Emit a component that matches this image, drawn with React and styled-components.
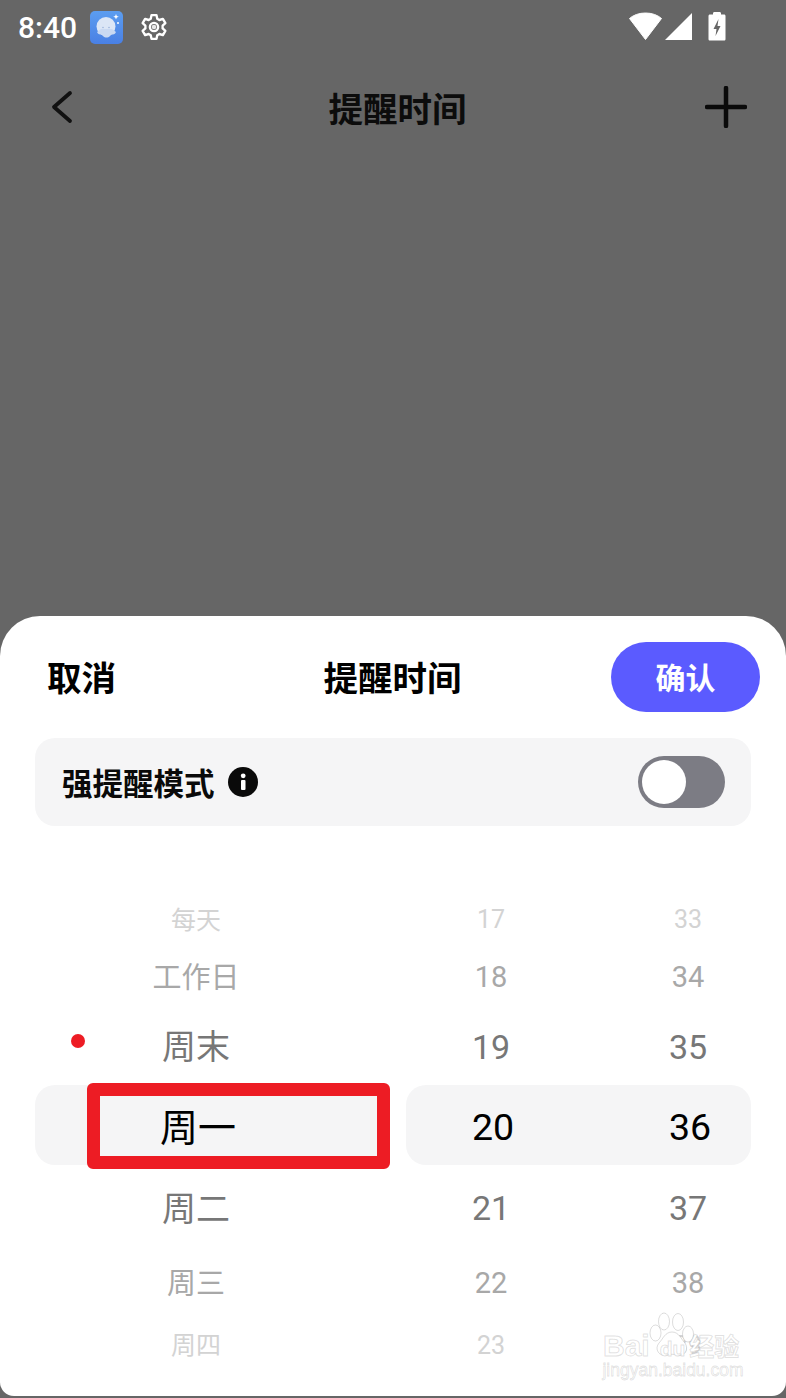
import React from "react";
import styled, { createGlobalStyle } from "styled-components";

const Global = createGlobalStyle`
  html, body { margin: 0; padding: 0; background: #666666; }
  * { box-sizing: border-box; }
`;

const CJK = `Roboto, "Noto Sans CJK SC", sans-serif`;

const Page = styled.div`
  position: relative;
  width: 786px;
  height: 1398px;
  overflow: hidden;
  background: #666666;
  font-family: ${CJK};
  display: flex;
  flex-direction: column;
`;

const StatusBar = styled.div`
  height: 54px;
  display: flex;
  align-items: center;
  padding: 0 60px 0 18px;
  color: #ffffff;
`;

const Clock = styled.span`
  font-size: 30px;
  font-weight: 500;
  width: 72px;
`;

const StatusRight = styled.div`
  margin-left: auto;
  display: flex;
  align-items: center;
  gap: 3px;
  padding-bottom: 2px;
`;

const Header = styled.div`
  height: 106px;
  display: grid;
  grid-template-columns: 1fr auto 1fr;
  align-items: center;
  padding: 0 39px 0 50px;
  color: #0c0c0c;
`;

const HeaderTitle = styled.div`
  font-size: 34.5px;
  font-weight: 700;
  margin-left: -2px;
`;

const HeaderAction = styled.div`
  justify-self: ${(p) => p.$side};
  display: flex;
`;

const Sheet = styled.div`
  margin-top: auto;
  height: 780px;
  margin-bottom: 2px;
  background: #ffffff;
  border-radius: 40px 40px 14px 14px;
  display: flex;
  flex-direction: column;
`;

const SheetTop = styled.div`
  height: 122px;
  padding: 26px 26px 0 47px;
  display: grid;
  grid-template-columns: 1fr auto 1fr;
  align-items: start;
`;

const Cancel = styled.div`
  font-size: 34.5px;
  font-weight: 700;
  line-height: 74px;
  color: #000;
`;

const SheetTitle = styled.div`
  font-size: 34.5px;
  font-weight: 700;
  line-height: 74px;
  color: #000;
  margin-left: -22px;
`;

const Confirm = styled.button`
  justify-self: end;
  width: 149px;
  height: 70px;
  border: 0;
  border-radius: 35px;
  background: #5b5bff;
  color: #ffffff;
  font-family: ${CJK};
  font-size: 30px;
  font-weight: 700;
  padding: 0 0 2px;
`;

const ModeRow = styled.div`
  margin: 0 35px;
  height: 88px;
  border-radius: 20px;
  background: #f5f5f6;
  display: flex;
  align-items: center;
  padding: 0 26px 0 27px;
`;

const ModeLabel = styled.span`
  font-size: 30.5px;
  font-weight: 700;
  color: #0a0a0a;
`;

const InfoIcon = styled.svg`
  margin-left: 13px;
`;

const Toggle = styled.div`
  margin-left: auto;
  width: 87px;
  height: 52px;
  border-radius: 26px;
  background: #7c7c84;
  padding: 4px;
`;

const Knob = styled.div`
  width: 44px;
  height: 44px;
  border-radius: 50%;
  background: #ffffff;
`;

const Wheel = styled.div`
  position: relative;
  margin: 63px 35px 0;
  display: flex;
  flex-direction: column;
`;

const Row = styled.div`
  height: ${(p) => p.$h}px;
  display: grid;
  grid-template-columns: 355px 345px;
  column-gap: 16px;
  align-items: stretch;
  font-size: ${(p) => p.$size}px;
  color: ${(p) => p.$color};
`;

const DayCell = styled.div`
  display: flex;
  align-items: center;
  justify-content: center;
  padding-right: ${(p) => (p.$active ? 29 : 33)}px;
  padding-bottom: ${(p) => (p.$active ? 2 : 0)}px;
  border-radius: 20px;
  background: ${(p) => (p.$active ? "#f5f5f6" : "transparent")};
`;

const TimeCell = styled.div`
  display: grid;
  grid-template-columns: 120px 120px;
  column-gap: 77px;
  padding-left: ${(p) => (p.$active ? 27 : 25)}px;
  padding-top: 4px;
  align-items: center;
  text-align: center;
  border-radius: 20px;
  background: ${(p) => (p.$active ? "#f5f5f6" : "transparent")};
  font-size: ${(p) => p.$num}px;
`;

const RedDot = styled.div`
  position: absolute;
  left: 36px;
  top: 145px;
  width: 14px;
  height: 14px;
  border-radius: 50%;
  background: #ed1c24;
`;

const RedBox = styled.div`
  position: absolute;
  left: 52px;
  top: 194px;
  width: 303px;
  height: 86px;
  border: 13px solid #ed1c24;
  border-radius: 6px;
`;

const Watermark = styled.div`
  position: absolute;
  left: 602px;
  top: 1312px;
  width: 142px;
  height: 72px;
  pointer-events: none;
`;

const WatermarkPaw = styled.svg`
  position: absolute;
  left: 47px;
  top: 0;
`;

const WatermarkBrand = styled.div`
  position: absolute;
  top: 17px;
  left: 1px;
  display: flex;
  align-items: baseline;
  font-family: "Liberation Sans", "Noto Sans CJK SC", sans-serif;
  font-weight: 700;
  line-height: 34px;
  color: #ffffff;
  -webkit-text-stroke: 1px rgba(120, 120, 120, 0.22);
`;

const BrandPart = styled.span`
  font-size: ${(p) => p.$size}px;
  margin-left: ${(p) => p.$gap}px;
`;

const WatermarkUrl = styled.div`
  position: absolute;
  top: 48px;
  left: 0;
  width: 142px;
  text-align: center;
  font-family: "Liberation Sans", sans-serif;
  font-size: 17.5px;
  line-height: 20px;
  color: #ffffff;
  -webkit-text-stroke: 0.8px rgba(120, 120, 120, 0.22);
`;

const AppIcon = () => (
  <svg width="33" height="33" viewBox="0 0 33 33">
    <defs>
      <linearGradient id="appBg" x1="0" y1="0" x2="0" y2="1">
        <stop offset="0" stopColor="#5b9df0" />
        <stop offset="1" stopColor="#4a80e4" />
      </linearGradient>
    </defs>
    <rect width="33" height="33" rx="5" fill="url(#appBg)" />
    <circle cx="16" cy="15.500" r="9.500" fill="#dbe6f6" />
    <path d="M7 21c2 4 4 1 6 4 2 2 5 2 7 0 2-3 4 0 6-4l-4-3H11z" fill="#c9d9f2" />
    <circle cx="13" cy="16.500" r="0.800" fill="#9db4dc" />
    <circle cx="19" cy="16.500" r="0.800" fill="#9db4dc" />
    <path d="M26 3l.8 2 2 .8-2 .8-.8 2-.8-2-2-.8 2-.8z" fill="#fff" />
    <circle cx="28" cy="12" r="1" fill="#fff" />
  </svg>
);

const Gear = () => (
  <svg width="30" height="30" viewBox="0 0 24 24" fill="none" stroke="#fff" strokeWidth="1.900" strokeLinejoin="round" style={{ marginLeft: 16 }}>
    <path d="M10 2.500h4l.6 2.900 1.700 1 2.800-.9 2 3.400-2.200 2v2.200l2.200 2-2 3.400-2.800-.9-1.700 1-.6 2.900h-4l-.6-2.900-1.700-1-2.800.9-2-3.400 2.200-2v-2.200l-2.200-2 2-3.400 2.800.9 1.700-1z" />
    <circle cx="12" cy="12" r="3.300" />
    <circle cx="12" cy="12" r="1.800" fill="#e8e8e8" stroke="none" />
  </svg>
);

const WifiIcon = () => (
  <svg width="33" height="28" viewBox="0 0 33 28">
    <path d="M0.500 6.500C4.500 3 10 1 16.500 1S28.500 3 32.500 6.500L16.500 27.500z" fill="#fff" stroke="#fff" strokeLinejoin="round" />
  </svg>
);

const SignalIcon = () => (
  <svg width="27" height="27" viewBox="0 0 27 27">
    <path d="M27 0V27H0z" fill="#fff" />
  </svg>
);

const BatteryIcon = () => (
  <svg width="18" height="30" viewBox="0 0 18 30" style={{ marginLeft: 13 }}>
    <path d="M5 2.500c0-.8.500-1.500 1.500-1.500h5c1 0 1.500.7 1.500 1.500V3.500h3c1 0 1.500.7 1.500 1.500v23c0 1-.5 1.500-1.500 1.500H2C1 29.500.500 29 .500 28V5c0-.8.500-1.500 1.500-1.500h3z" fill="#fff" />
    <path d="M10.500 8L5.500 18h3l-1 7 5-10h-3z" fill="#666" />
  </svg>
);

const rows = [
  { h: 57, size: 25, num: 25, color: "#d3d3d3", day: "每天", hour: "17", min: "33" },
  { h: 58, size: 29, num: 29, color: "#a8a8a8", day: "工作日", hour: "18", min: "34" },
  { h: 81, size: 34, num: 34, color: "#777777", day: "周末", hour: "19", min: "35" },
  { h: 80, size: 38, num: 37.500, color: "#000000", day: "周一", hour: "20", min: "36", active: true },
  { h: 82, size: 34, num: 34, color: "#777777", day: "周二", hour: "21", min: "37" },
  { h: 68, size: 29, num: 29, color: "#a8a8a8", day: "周三", hour: "22", min: "38" },
  { h: 56, size: 25, num: 25, color: "#d3d3d3", day: "周四", hour: "23", min: "39" },
];

export default function App() {
  return (
    <Page>
      <Global />
      <StatusBar>
        <Clock>8:40</Clock>
        <AppIcon />
        <Gear />
        <StatusRight>
          <WifiIcon />
          <SignalIcon />
          <BatteryIcon />
        </StatusRight>
      </StatusBar>
      <Header>
        <HeaderAction $side="start">
          <svg width="26" height="36" viewBox="0 0 26 36" fill="none" stroke="#111" strokeWidth="3.800" strokeLinecap="round" strokeLinejoin="round">
            <path d="M20 4L4 18l16 14" />
          </svg>
        </HeaderAction>
        <HeaderTitle>提醒时间</HeaderTitle>
        <HeaderAction $side="end">
          <svg width="42" height="42" viewBox="0 0 42 42" fill="none" stroke="#0a0a0a" strokeWidth="4.500" strokeLinecap="round">
            <path d="M21 2v38M2 21h38" />
          </svg>
        </HeaderAction>
      </Header>
      <Sheet>
        <SheetTop>
          <Cancel>取消</Cancel>
          <SheetTitle>提醒时间</SheetTitle>
          <Confirm>确认</Confirm>
        </SheetTop>
        <ModeRow>
          <ModeLabel>强提醒模式</ModeLabel>
          <InfoIcon width="30" height="30" viewBox="0 0 30 30">
            <circle cx="15" cy="15" r="15" fill="#0a0a0a" />
            <rect x="13" y="13" width="4.500" height="10" rx="1" fill="#fff" />
            <circle cx="15.200" cy="8.800" r="2.400" fill="#fff" />
          </InfoIcon>
          <Toggle>
            <Knob />
          </Toggle>
        </ModeRow>
        <Wheel>
          {rows.map((r) => (
            <Row key={r.day} $h={r.h} $size={r.size} $color={r.color}>
              <DayCell $active={r.active}>{r.day}</DayCell>
              <TimeCell $active={r.active} $num={r.num}>
                <span>{r.hour}</span>
                <span>{r.min}</span>
              </TimeCell>
            </Row>
          ))}
          <RedDot />
          <RedBox />
        </Wheel>
      </Sheet>
      <Watermark>
        <WatermarkPaw width="46" height="48" viewBox="0 0 46 48" fill="#fff" stroke="rgba(120,120,120,0.25)" strokeWidth="1">
          <ellipse cx="6.500" cy="21" rx="5.500" ry="8" />
          <ellipse cx="15" cy="9.500" rx="5.500" ry="8.500" />
          <ellipse cx="29" cy="10" rx="5.500" ry="8.500" />
          <ellipse cx="39" cy="22" rx="5.500" ry="8" />
          <path d="M23 20c-7 0-9 7-13 11-5 6 0 14 8 12 3-1 7-1 10 0 8 2 12-6 8-12-4-4-6-11-13-11z" />
        </WatermarkPaw>
        <WatermarkBrand>
          <BrandPart $size={30} $gap={0}>Bai</BrandPart>
          <BrandPart $size={21} $gap={10}>du</BrandPart>
          <BrandPart $size={25} $gap={4}>经验</BrandPart>
        </WatermarkBrand>
        <WatermarkUrl>jingyan.baidu.com</WatermarkUrl>
      </Watermark>
    </Page>
  );
}
